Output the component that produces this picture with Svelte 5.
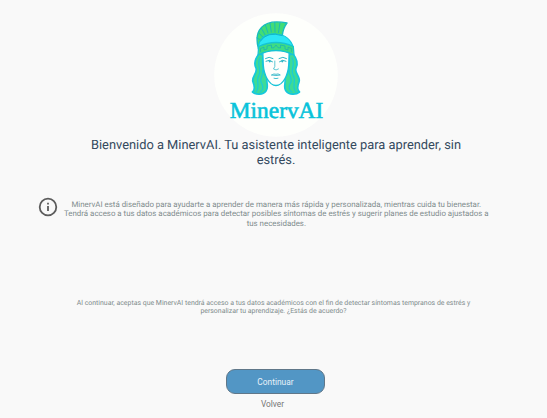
<script>
  const title = ['Bienvenido a MinervAI. Tu asistente inteligente para aprender, sin', 'estrés.'];
  const intro = [
    'MinervAI está diseñado para ayudarte a aprender de manera más rápida y personalizada, mientras cuida tu bienestar.',
    'Tendrá acceso a tus datos académicos para detectar posibles síntomas de estrés y sugerir planes de estudio ajustados a',
    'tus necesidades.'
  ];
  const consent = [
    'Al continuar, aceptas que MinervAI tendrá acceso a tus datos académicos con el fin de detectar síntomas tempranos de estrés y',
    'personalizar tu aprendizaje. ¿Estás de acuerdo?'
  ];
</script>

<main>
  <svg class="logo" viewBox="214 13 124 124" role="img" aria-label="MinervAI">
    <circle cx="276" cy="75" r="61.8" fill="#fefffc" />
    <g stroke-linejoin="round" stroke-linecap="round">
      <!-- hair -->
      <g fill="#3edb96" stroke="#16c8dc" stroke-width="1.7">
        <path d="M259 54C254 60 254 64 256 68C258 73 251 77 253 82C255 87 255 90 252.500 92C256 95 263 95 266 91C269 87 266 83 267 78C263 72 262 65 263 55Z" />
        <path d="M293 54C298 60 298 64 296 68C294 73 301 77 299 82C297 87 297 90 299.500 92C296 95 289 95 286 91C283 87 286 83 285 78C289 72 290 65 289 55Z" />
      </g>
      <g fill="none" stroke="#1acbd8" stroke-width="1.2">
        <path d="M260 58C256 65 262 69 259 75C255 81 261 86 256 92M262.500 70C264 76 258 79 262 84C264 88 262 91 260 92" />
        <path d="M292 58C296 65 290 69 293 75C297 81 291 86 296 92M289.500 70C288 76 294 79 290 84C288 88 290 91 292 92" />
      </g>
      <!-- face -->
      <path d="M262.800 52Q276 45 289.200 52L288.700 65C288 75 283 85.500 276 85.500S264 75 263.300 65Z" fill="#fefffc" stroke="#16c4d8" stroke-width="1.3" />
      <g fill="none" stroke="#2bb5c6" stroke-width="1">
        <path d="M265.500 58.500Q269 56 273 58.500M279 58.500Q283 56 286.500 58.500" />
        <path d="M266 61.200Q269.500 58.900 272.500 61.700M279.500 61.700Q282.500 58.900 286 61.200" />
        <path d="M274.800 61V66.500L273.500 69Q276 71 278.500 69" stroke-width=".75" />
        <path d="M271.700 75Q274 73.200 276 74.300Q278 73.200 280.300 75Q276 76.200 271.700 75M274 78.300Q276 79 278 78.300" stroke-width=".85" />
      </g>
      <circle cx="269.700" cy="61.300" r="1.100" fill="#2bb5c6" />
      <circle cx="282.300" cy="61.300" r="1.100" fill="#2bb5c6" />
      <!-- crest -->
      <path d="M258.500 49C253.500 31 262 18 287 23Q283 28 282.200 36Q267 30.500 261 43Z" fill="#42dc76" stroke="#18bcc0" stroke-width="1.400" />
      <path d="M261 40L256.800 38M262.700 37L258.500 32.500M265 34.700L261.500 28.500M268 33L265.500 25.300M271.300 32L270 23.200M275 32L274.800 22.300M278.500 32.500L280 22.800" fill="none" stroke="#18bcb8" stroke-width="1" />
      <!-- helmet -->
      <path d="M258.500 49C258 39 265 33.500 276 34Q290 35 293.500 48Q276 38 258.500 49Z" fill="#2ce6f5" stroke="#12c8dc" stroke-width="1.200" />
      <path d="M260.500 41Q267 31 282 35.500" fill="none" stroke="#14b8c8" stroke-width="1" />
      <path d="M258.700 46.500Q276 38.500 293.300 46.500L294 55Q276 46 258 55Z" fill="#3fdc83" stroke="#16c4d2" stroke-width="1.300" />
      <path d="M260.500 51.500V48.500L264 47.200V50L267 49V46L271.500 45.100V48L274 47.700L276 45L278 47.700L280.500 48V45.100L285 46V49L288 50V47.200L291.500 48.500V51.500" fill="none" stroke="#1ab4b4" stroke-width=".8" />
    </g>
    <text x="229.800" y="117.500" textLength="93.500" lengthAdjust="spacingAndGlyphs">MinervAI</text>
  </svg>

  <h1>{#each title as line}<span>{line}</span>{/each}</h1>

  <section class="info">
    <svg viewBox="0 0 20 20" aria-hidden="true">
      <circle cx="10" cy="10" r="8.300" fill="none" stroke="#5c5c5c" stroke-width="1.800" />
      <path d="M10 9V14M10 5.700V7.500" stroke="#5c5c5c" stroke-width="1.800" />
    </svg>
    <p>{#each intro as line}<span>{line}</span>{/each}</p>
  </section>

  <p class="consent">{#each consent as line}<span>{line}</span>{/each}</p>

  <div class="actions">
    <button class="primary">Continuar</button>
    <button class="back">Volver</button>
  </div>
</main>

<style>
  :global(body) { background: #f9f9f9; }
  main {
    box-sizing: border-box;
    height: 418px;
    padding-top: 13px;
    overflow: hidden;
    display: flex;
    flex-direction: column;
    align-items: center;
    font-family: Roboto, sans-serif;
    text-align: center;
    text-rendering: geometricPrecision;
  }
  span { display: block; white-space: nowrap; }
  .logo { width: 124px; height: 124px; flex: none; margin-left: 5px; }
  .logo text {
    font: 23px "Liberation Serif", serif;
    fill: #08c3da;
    stroke: #08c3da;
    stroke-width: .6px;
  }
  h1 {
    margin: 1px 0 0 5px;
    font-size: 12.85px;
    line-height: 15px;
    font-weight: 400;
    color: #34495e;
  }
  .info {
    display: flex;
    align-items: flex-start;
    gap: 6px;
    margin: 29px 0 0 -21px;
    width: 450px;
    height: 32px;
  }
  .info svg { width: 20px; height: 20px; flex: none; }
  p { margin: 0; color: #7f8c8d; }
  .info p { font-size: 7.9px; line-height: 9.4px; padding-top: 3px; }
  .consent { margin-top: 70px; font-size: 6.93px; line-height: 8px; }
  .actions {
    display: flex;
    flex-direction: column;
    align-items: center;
    margin: 54px 0 0 4px;
  }
  button { font-family: inherit; padding: 0; font-size: 8.4px; }
  .primary {
    box-sizing: border-box;
    width: 99px;
    height: 25px;
    border: 1px solid #607789;
    border-radius: 9px;
    background: #5296c5;
    color: #e8f2f9;
  }
  .back { margin: 5px 6px 0 0; border: 0; background: none; color: #777; line-height: 10px; }
</style>
